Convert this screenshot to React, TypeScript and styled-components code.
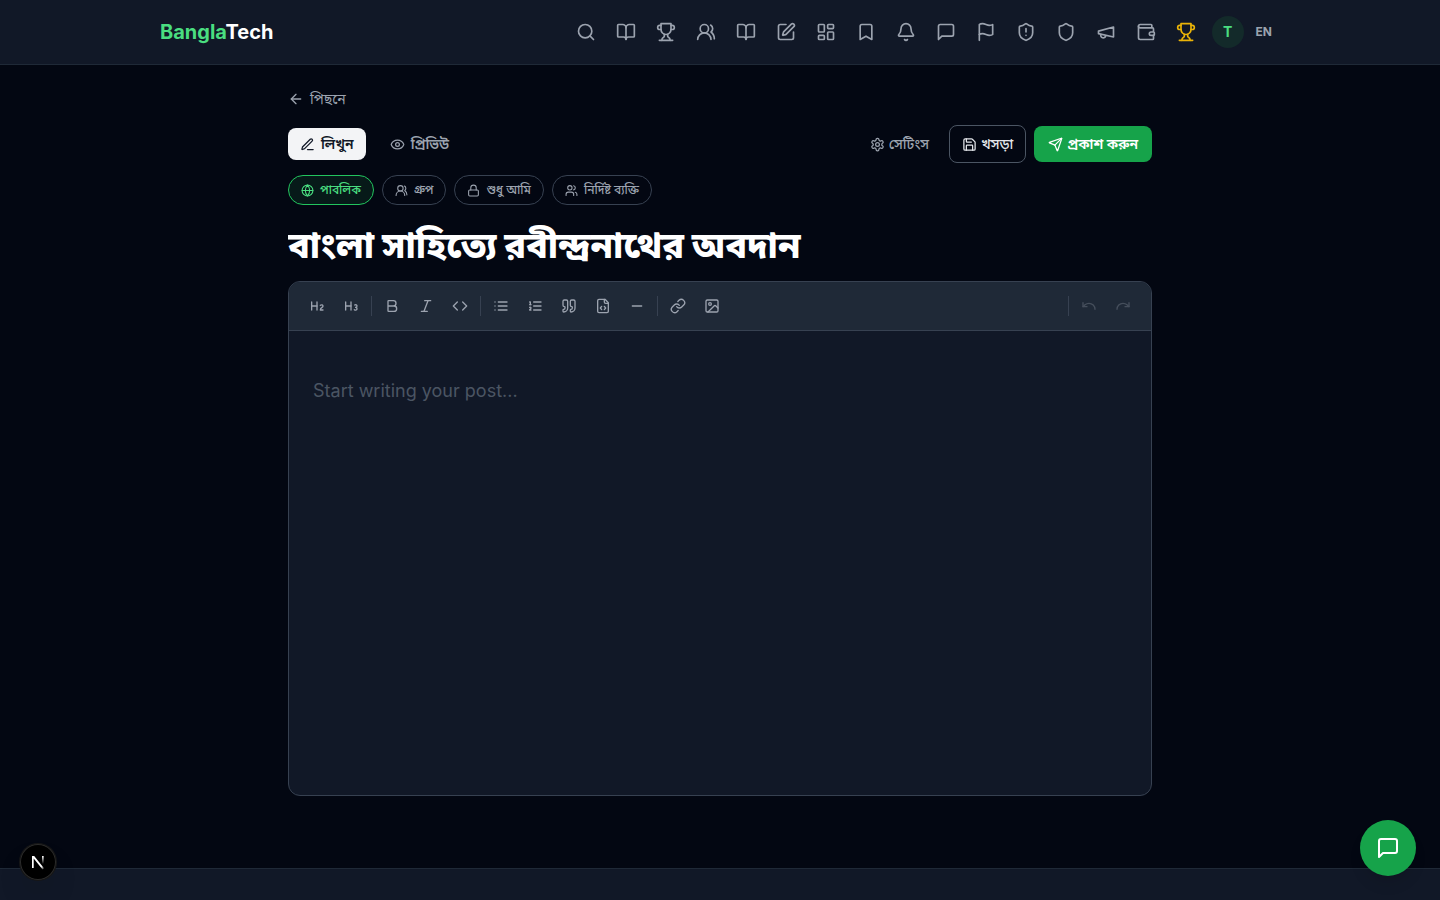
import React from 'react';
import styled, { createGlobalStyle, css } from 'styled-components';

const GlobalStyle = createGlobalStyle`
  *, *::before, *::after { box-sizing: border-box; }
  body {
    margin: 0;
    background: #030712;
    color: #f3f4f6;
    font-family: Inter, "Noto Sans Bengali", sans-serif;
    font-size: 16px;
    line-height: 24px;
  }
  button, input, textarea { font: inherit; color: inherit; margin: 0; }
  button { cursor: pointer; background: none; border: 0; padding: 0; }
  a { color: inherit; text-decoration: none; }
`;

const icons: Record<string, string[]> = {
  search: ['M3 11a8 8 0 1 0 16 0 8 8 0 1 0-16 0', 'm21 21-4.3-4.3'],
  book: ['M12 7v14', 'M3 18a1 1 0 0 1-1-1V4a1 1 0 0 1 1-1h5a4 4 0 0 1 4 4 4 4 0 0 1 4-4h5a1 1 0 0 1 1 1v13a1 1 0 0 1-1 1h-6a3 3 0 0 0-3 3 3 3 0 0 0-3-3z'],
  trophy: ['M6 9H4.5a2.5 2.5 0 0 1 0-5H6', 'M18 9h1.5a2.5 2.5 0 0 0 0-5H18', 'M4 22h16', 'M10 14.66V17c0 .55-.47.98-.97 1.21C7.85 18.75 7 20.24 7 22', 'M14 14.66V17c0 .55.47.98.97 1.21C16.15 18.75 17 20.24 17 22', 'M18 2H6v7a6 6 0 0 0 12 0V2Z'],
  usersRound: ['M18 21a8 8 0 0 0-16 0', 'M5 8a5 5 0 1 0 10 0 5 5 0 1 0-10 0', 'M22 20c0-3.37-2-6.5-4-8a5 5 0 0 0-.45-8.3'],
  users: ['M16 21v-2a4 4 0 0 0-4-4H6a4 4 0 0 0-4 4v2', 'M5 7a4 4 0 1 0 8 0 4 4 0 1 0-8 0', 'M22 21v-2a4 4 0 0 0-3-3.87', 'M16 3.13a4 4 0 0 1 0 7.75'],
  squarePen: ['M12 3H5a2 2 0 0 0-2 2v14a2 2 0 0 0 2 2h14a2 2 0 0 0 2-2v-7', 'M18.375 2.625a1 1 0 0 1 3 3l-9.013 9.014a2 2 0 0 1-.853.505l-2.873.84a.5.5 0 0 1-.62-.62l.84-2.873a2 2 0 0 1 .506-.852z'],
  dashboard: ['M4 3h5a1 1 0 0 1 1 1v7a1 1 0 0 1-1 1H4a1 1 0 0 1-1-1V4a1 1 0 0 1 1-1z', 'M15 3h5a1 1 0 0 1 1 1v3a1 1 0 0 1-1 1h-5a1 1 0 0 1-1-1V4a1 1 0 0 1 1-1z', 'M15 12h5a1 1 0 0 1 1 1v7a1 1 0 0 1-1 1h-5a1 1 0 0 1-1-1v-7a1 1 0 0 1 1-1z', 'M4 16h5a1 1 0 0 1 1 1v3a1 1 0 0 1-1 1H4a1 1 0 0 1-1-1v-3a1 1 0 0 1 1-1z'],
  bookmark: ['m19 21-7-4-7 4V5a2 2 0 0 1 2-2h10a2 2 0 0 1 2 2v16z'],
  bell: ['M10.268 21a2 2 0 0 0 3.464 0', 'M3.262 15.326A1 1 0 0 0 4 17h16a1 1 0 0 0 .74-1.673C19.41 13.956 18 12.499 18 8A6 6 0 0 0 6 8c0 4.499-1.411 5.956-2.738 7.326'],
  message: ['M21 15a2 2 0 0 1-2 2H7l-4 4V5a2 2 0 0 1 2-2h14a2 2 0 0 1 2 2z'],
  flag: ['M4 15s1-1 4-1 5 2 8 2 4-1 4-1V3s-1 1-4 1-5-2-8-2-4 1-4 1z', 'M4 22v-7'],
  shield: ['M20 13c0 5-3.5 7.5-7.66 8.95a1 1 0 0 1-.67-.01C7.5 20.5 4 18 4 13V6a1 1 0 0 1 1-1c2 0 4.5-1.2 6.24-2.72a1.17 1.17 0 0 1 1.52 0C14.51 3.81 17 5 19 5a1 1 0 0 1 1 1z'],
  megaphone: ['m3 11 18-5v12L3 14v-3z', 'M11.6 16.8a3 3 0 1 1-5.8-1.6'],
  wallet: ['M19 7V4a1 1 0 0 0-1-1H5a2 2 0 0 0 0 4h15a1 1 0 0 1 1 1v4h-3a2 2 0 0 0 0 4h3a1 1 0 0 0 1-1v-2a1 1 0 0 0-1-1', 'M3 5v14a2 2 0 0 0 2 2h15a1 1 0 0 0 1-1v-4'],
  arrowLeft: ['m12 19-7-7 7-7', 'M19 12H5'],
  penLine: ['M12 20h9', 'M16.376 3.622a1 1 0 0 1 3.002 3.002L7.368 18.635a2 2 0 0 1-.855.506l-2.872.838a.5.5 0 0 1-.62-.62l.838-2.872a2 2 0 0 1 .506-.854z'],
  eye: ['M2.062 12.348a1 1 0 0 1 0-.696 10.75 10.75 0 0 1 19.876 0 1 1 0 0 1 0 .696 10.75 10.75 0 0 1-19.876 0', 'M9 12a3 3 0 1 0 6 0 3 3 0 1 0-6 0'],
  settings: ['M12.22 2h-.44a2 2 0 0 0-2 2v.18a2 2 0 0 1-1 1.73l-.43.25a2 2 0 0 1-2 0l-.15-.08a2 2 0 0 0-2.73.73l-.22.38a2 2 0 0 0 .73 2.73l.15.1a2 2 0 0 1 1 1.72v.51a2 2 0 0 1-1 1.74l-.15.09a2 2 0 0 0-.73 2.73l.22.38a2 2 0 0 0 2.73.73l.15-.08a2 2 0 0 1 2 0l.43.25a2 2 0 0 1 1 1.73V20a2 2 0 0 0 2 2h.44a2 2 0 0 0 2-2v-.18a2 2 0 0 1 1-1.73l.43-.25a2 2 0 0 1 2 0l.15.08a2 2 0 0 0 2.73-.73l.22-.39a2 2 0 0 0-.73-2.73l-.15-.08a2 2 0 0 1-1-1.74v-.5a2 2 0 0 1 1-1.74l.15-.09a2 2 0 0 0 .73-2.73l-.22-.38a2 2 0 0 0-2.73-.73l-.15.08a2 2 0 0 1-2 0l-.43-.25a2 2 0 0 1-1-1.73V4a2 2 0 0 0-2-2z', 'M9 12a3 3 0 1 0 6 0 3 3 0 1 0-6 0'],
  save: ['M15.2 3a2 2 0 0 1 1.4.6l3.8 3.8a2 2 0 0 1 .6 1.4V19a2 2 0 0 1-2 2H5a2 2 0 0 1-2-2V5a2 2 0 0 1 2-2z', 'M17 21v-7a1 1 0 0 0-1-1H8a1 1 0 0 0-1 1v7', 'M7 3v4a1 1 0 0 0 1 1h7'],
  send: ['M14.536 21.686a.5.5 0 0 0 .937-.024l6.5-19a.496.496 0 0 0-.635-.635l-19 6.5a.5.5 0 0 0-.024.937l7.93 3.18a2 2 0 0 1 1.112 1.11z', 'm21.854 2.147-10.94 10.939'],
  globe: ['M2 12a10 10 0 1 0 20 0 10 10 0 1 0-20 0', 'M12 2a14.5 14.5 0 0 0 0 20 14.5 14.5 0 0 0 0-20', 'M2 12h20'],
  lock: ['M5 11h14a2 2 0 0 1 2 2v7a2 2 0 0 1-2 2H5a2 2 0 0 1-2-2v-7a2 2 0 0 1 2-2z', 'M7 11V7a5 5 0 0 1 10 0v4'],
  h2: ['M4 12h8', 'M4 18V6', 'M12 18V6', 'M21 18h-4c0-4 4-3 4-6 0-1.5-2-2.5-4-1'],
  h3: ['M4 12h8', 'M4 18V6', 'M12 18V6', 'M17.5 10.5c1.7-1 3.5 0 3.5 1.5a2 2 0 0 1-2 2', 'M17 17.5c2 1.5 4 .3 4-1.5a2 2 0 0 0-2-2'],
  bold: ['M6 12h9a4 4 0 0 1 0 8H7a1 1 0 0 1-1-1V5a1 1 0 0 1 1-1h7a4 4 0 0 1 0 8'],
  italic: ['M19 4h-9', 'M14 20H5', 'M15 4 9 20'],
  code: ['m16 18 6-6-6-6', 'm8 6-6 6 6 6'],
  list: ['M3 12h.01', 'M3 18h.01', 'M3 6h.01', 'M8 12h13', 'M8 18h13', 'M8 6h13'],
  listOrdered: ['M10 12h11', 'M10 18h11', 'M10 6h11', 'M4 10h2', 'M4 6h1v4', 'M6 18H4c0-1 2-2 2-3s-1-1.5-2-1'],
  quote: ['M16 3a2 2 0 0 0-2 2v6a2 2 0 0 0 2 2 1 1 0 0 1 1 1v1a2 2 0 0 1-2 2 1 1 0 0 0-1 1v2a1 1 0 0 0 1 1 6 6 0 0 0 6-6V5a2 2 0 0 0-2-2z', 'M5 3a2 2 0 0 0-2 2v6a2 2 0 0 0 2 2 1 1 0 0 1 1 1v1a2 2 0 0 1-2 2 1 1 0 0 0-1 1v2a1 1 0 0 0 1 1 6 6 0 0 0 6-6V5a2 2 0 0 0-2-2z'],
  fileCode: ['M10 12.5 8 15l2 2.5', 'm14 12.5 2 2.5-2 2.5', 'M14 2v4a2 2 0 0 0 2 2h4', 'M15 2H6a2 2 0 0 0-2 2v16a2 2 0 0 0 2 2h12a2 2 0 0 0 2-2V7z'],
  minus: ['M5 12h14'],
  link: ['M10 13a5 5 0 0 0 7.54.54l3-3a5 5 0 0 0-7.07-7.07l-1.72 1.71', 'M14 11a5 5 0 0 0-7.54-.54l-3 3a5 5 0 0 0 7.07 7.07l1.71-1.71'],
  image: ['M5 3h14a2 2 0 0 1 2 2v14a2 2 0 0 1-2 2H5a2 2 0 0 1-2-2V5a2 2 0 0 1 2-2z', 'M7 9a2 2 0 1 0 4 0 2 2 0 1 0-4 0', 'm21 15-3.086-3.086a2 2 0 0 0-2.828 0L6 21'],
  undo: ['M3 7v6h6', 'M21 17a9 9 0 0 0-9-9 9 9 0 0 0-6 2.3L3 13'],
  redo: ['M21 7v6h-6', 'M3 17a9 9 0 0 1 9-9 9 9 0 0 1 6 2.3l3 2.7'],
};
icons.shieldAlert = [...icons.shield, 'M12 8v4', 'M12 16h.01'];

const Svg = styled.svg`
  display: block;
  flex: none;
  fill: none;
  stroke: currentColor;
  stroke-width: 2;
  stroke-linecap: round;
  stroke-linejoin: round;
`;

function Icon({ name, size }: { name: string; size: number }) {
  return (
    <Svg width={size} height={size} viewBox="0 0 24 24" aria-hidden="true">
      {icons[name].map((d) => <path key={d} d={d} />)}
    </Svg>
  );
}

const Page = styled.div`
  display: flex;
  flex-direction: column;
  height: 100vh;
  overflow: hidden;
`;

const Header = styled.header`
  flex: none;
  background: #111827;
  border-bottom: 1px solid #1f2937;
`;

const HeaderInner = styled.div`
  display: flex;
  align-items: center;
  justify-content: space-between;
  max-width: 1152px;
  height: 64px;
  margin: 0 auto;
  padding: 0 16px;
`;

const Logo = styled.a`
  font-size: 20px;
  line-height: 28px;
  font-weight: 700;
  color: #fff;
  span { color: #4ade80; }
`;

const Nav = styled.nav`
  display: flex;
  align-items: center;
  gap: 4px;
`;

const NavLink = styled.a<{ $gold?: boolean }>`
  padding: 8px;
  border-radius: 8px;
  color: ${(p) => (p.$gold ? '#eab308' : '#9ca3af')};
`;

const Avatar = styled.button`
  width: 32px;
  height: 32px;
  margin-left: 4px;
  border-radius: 50%;
  background: #132a2a;
  color: #4ade80;
  font-size: 14px;
  font-weight: 700;
`;

const Language = styled.button`
  padding: 4px 8px;
  color: #9ca3af;
  font-size: 12px;
  line-height: 16px;
  font-weight: 700;
`;

const Main = styled.main`
  flex: none;
  width: 100%;
  max-width: 896px;
  margin: 0 auto;
  padding: 24px 16px 72px;
`;

const BackLink = styled.a`
  display: inline-flex;
  align-items: center;
  gap: 6px;
  height: 20px;
  margin-bottom: 16px;
  color: #9ca3af;
  font-size: 14px;
  line-height: 20px;
`;

const Bar = styled.div`
  display: flex;
  align-items: center;
  justify-content: space-between;
  margin-bottom: 12px;
`;

const Group = styled.div`
  display: flex;
  align-items: center;
  gap: 8px;
`;

const Tab = styled.button<{ $active?: boolean }>`
  display: flex;
  align-items: center;
  gap: 6px;
  height: 32px;
  padding: 0 12px;
  margin-right: 4px;
  border-radius: 8px;
  font-size: 14px;
  line-height: 20px;
  font-weight: 600;
  background: ${(p) => (p.$active ? '#f3f4f6' : 'transparent')};
  color: ${(p) => (p.$active ? '#111827' : '#9ca3af')};
`;

const Action = styled.button<{ $kind: 'plain' | 'outline' | 'primary' }>`
  display: flex;
  align-items: center;
  gap: 4px;
  height: 36px;
  padding: 0 12px;
  border-radius: 8px;
  font-size: 14px;
  line-height: 20px;
  font-weight: 500;
  color: #9ca3af;
  ${(p) => p.$kind === 'outline' && css`
    height: 38px;
    border: 1px solid #4b5563;
    color: #e5e7eb;
  `}
  ${(p) => p.$kind === 'primary' && css`
    padding: 0 14px;
    background: #16a34a;
    color: #fff;
    font-weight: 600;
  `}
`;

const Audience = styled.div`
  display: flex;
  gap: 8px;
  margin-bottom: 20px;
`;

const Chip = styled.button<{ $active?: boolean }>`
  display: flex;
  align-items: center;
  gap: 6px;
  height: 30px;
  padding: 0 12px;
  border-radius: 15px;
  border: 1px solid ${(p) => (p.$active ? '#22c55e' : '#374151')};
  background: ${(p) => (p.$active ? '#071a19' : 'transparent')};
  color: ${(p) => (p.$active ? '#4ade80' : '#9ca3af')};
  font-size: 12px;
  line-height: 16px;
  font-weight: 500;
`;

const TitleInput = styled.input`
  display: block;
  width: 100%;
  height: 40px;
  margin-bottom: 16px;
  padding: 0;
  border: 0;
  outline: 0;
  background: transparent;
  color: #fff;
  font-size: 36px;
  line-height: 40px;
  font-weight: 800;
`;

const Editor = styled.section`
  border: 1px solid #374151;
  border-radius: 12px;
  overflow: hidden;
  background: #111827;
`;

const Toolbar = styled.div`
  display: flex;
  align-items: center;
  gap: 2px;
  height: 49px;
  padding: 8px 12px;
  background: #1f2937;
  border-bottom: 1px solid #374151;
`;

const Tool = styled.button`
  padding: 8px;
  border-radius: 4px;
  color: #9ca3af;
  &:disabled { opacity: 0.3; }
`;

const Divider = styled.span<{ $end?: boolean }>`
  width: 1px;
  height: 20px;
  margin: 0 2px;
  background: #374151;
  ${(p) => p.$end && 'margin-left: auto;'}
`;

const Body = styled.textarea`
  display: block;
  width: 100%;
  height: 464px;
  padding: 44px 24px;
  border: 0;
  outline: 0;
  resize: none;
  background: transparent;
  font-size: 18px;
  line-height: 32px;
  &::placeholder { color: #4b5563; opacity: 1; }
`;

const Footer = styled.footer`
  flex: 1 0 28px;
  background: #111827;
  border-top: 1px solid #1f2937;
`;

const ChatButton = styled.button`
  position: fixed;
  right: 24px;
  bottom: 24px;
  display: grid;
  place-items: center;
  width: 56px;
  height: 56px;
  border-radius: 50%;
  background: #16a34a;
  color: #fff;
  box-shadow: 0 10px 15px -3px rgba(0, 0, 0, 0.1), 0 4px 6px -4px rgba(0, 0, 0, 0.1);
`;

const DevButton = styled.button`
  position: fixed;
  left: 20px;
  bottom: 20px;
  display: grid;
  place-items: center;
  width: 36px;
  height: 36px;
  border-radius: 50%;
  background: #000;
  box-shadow: 0 0 0 1px #171717, inset 0 0 0 1px #2b2b2b, 0 16px 32px -8px rgba(0, 0, 0, 0.24);
`;

const navItems: [string, string][] = [
  ['search', 'Search'], ['book', 'Blog'], ['trophy', 'Contests'], ['usersRound', 'Groups'],
  ['book', 'Library'], ['squarePen', 'Write'], ['dashboard', 'Dashboard'], ['bookmark', 'Bookmarks'],
  ['bell', 'Notifications'], ['message', 'Messages'], ['flag', 'Reports'], ['shieldAlert', 'Moderation'],
  ['shield', 'Admin'], ['megaphone', 'Ads'], ['wallet', 'Wallet'],
];

const audiences: [string, string][] = [
  ['globe', 'পাবলিক'], ['usersRound', 'গ্রুপ'], ['lock', 'শুধু আমি'], ['users', 'নির্দিষ্ট ব্যক্তি'],
];

const toolGroups: [string, string][][] = [
  [['h2', 'Heading 2'], ['h3', 'Heading 3']],
  [['bold', 'Bold'], ['italic', 'Italic'], ['code', 'Inline code']],
  [['list', 'Bullet list'], ['listOrdered', 'Numbered list'], ['quote', 'Quote'], ['fileCode', 'Code block'], ['minus', 'Divider']],
  [['link', 'Link'], ['image', 'Image']],
];

export default function App() {
  return (
    <>
      <GlobalStyle />
      <Page>
        <Header>
          <HeaderInner>
            <Logo href="#"><span>Bangla</span>Tech</Logo>
            <Nav>
              {navItems.map(([icon, label]) => (
                <NavLink key={label} href="#" aria-label={label}><Icon name={icon} size={20} /></NavLink>
              ))}
              <NavLink href="#" aria-label="Leaderboard" $gold><Icon name="trophy" size={20} /></NavLink>
              <Avatar type="button">T</Avatar>
              <Language type="button">EN</Language>
            </Nav>
          </HeaderInner>
        </Header>

        <Main>
          <BackLink href="#"><Icon name="arrowLeft" size={16} />পিছনে</BackLink>
          <Bar>
            <Group>
              <Tab type="button" $active><Icon name="penLine" size={15} />লিখুন</Tab>
              <Tab type="button"><Icon name="eye" size={15} />প্রিভিউ</Tab>
            </Group>
            <Group>
              <Action type="button" $kind="plain"><Icon name="settings" size={15} />সেটিংস</Action>
              <Action type="button" $kind="outline"><Icon name="save" size={15} />খসড়া</Action>
              <Action type="button" $kind="primary"><Icon name="send" size={15} />প্রকাশ করুন</Action>
            </Group>
          </Bar>
          <Audience>
            {audiences.map(([icon, label], i) => (
              <Chip key={label} type="button" $active={i === 0}><Icon name={icon} size={13} />{label}</Chip>
            ))}
          </Audience>
          <TitleInput aria-label="Title" defaultValue="বাংলা সাহিত্যে রবীন্দ্রনাথের অবদান" />
          <Editor>
            <Toolbar>
              {toolGroups.map((group, i) => (
                <React.Fragment key={i}>
                  {i > 0 && <Divider />}
                  {group.map(([icon, label]) => (
                    <Tool key={label} type="button" aria-label={label}><Icon name={icon} size={16} /></Tool>
                  ))}
                </React.Fragment>
              ))}
              <Divider $end />
              <Tool type="button" aria-label="Undo" disabled><Icon name="undo" size={16} /></Tool>
              <Tool type="button" aria-label="Redo" disabled><Icon name="redo" size={16} /></Tool>
            </Toolbar>
            <Body aria-label="Post" placeholder="Start writing your post..." />
          </Editor>
        </Main>
        <Footer />
      </Page>

      <DevButton type="button" aria-label="Developer tools">
        <svg width="20" height="20" viewBox="0 0 20 20" fill="none" aria-hidden="true">
          <defs>
            <linearGradient id="diagonal" x1="9" y1="9" x2="15" y2="17" gradientUnits="userSpaceOnUse">
              <stop stopColor="#fff" /><stop offset="0.7" stopColor="#fff" /><stop offset="1" stopColor="#fff" stopOpacity="0.3" />
            </linearGradient>
            <linearGradient id="stem" x1="15" y1="4" x2="15" y2="12" gradientUnits="userSpaceOnUse">
              <stop stopColor="#fff" /><stop offset="1" stopColor="#fff" stopOpacity="0" />
            </linearGradient>
          </defs>
          <path d="M4 4h2.200l9.800 12.200-1.400 1.200L5.700 6.500V16H4z" fill="url(#diagonal)" />
          <path d="M14 4h1.700v8.500H14z" fill="url(#stem)" />
        </svg>
      </DevButton>
      <ChatButton type="button" aria-label="Chat"><Icon name="message" size={24} /></ChatButton>
    </>
  );
}
